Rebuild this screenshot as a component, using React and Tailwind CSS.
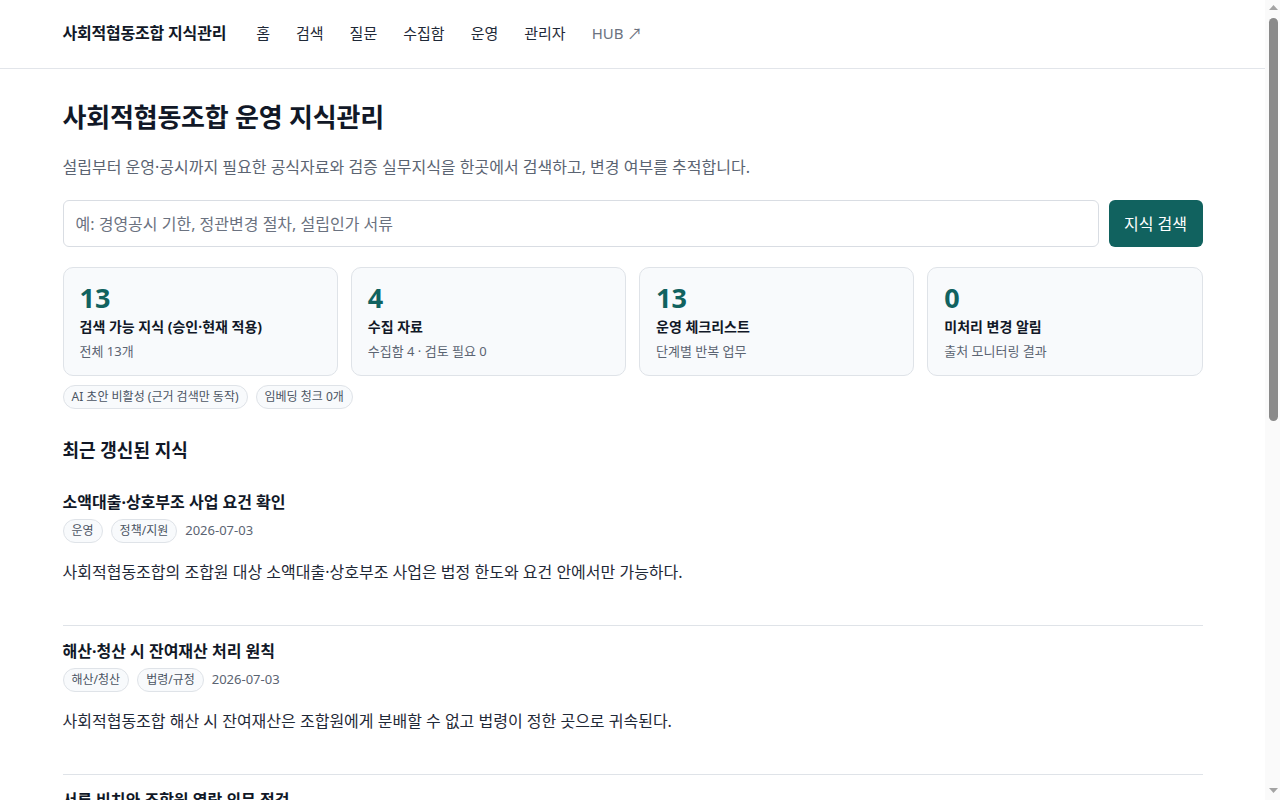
import React from "react";

const stats = [
  { value: "13", label: "검색 가능 지식 (승인·현재 적용)", sub: "전체 13개" },
  { value: "4", label: "수집 자료", sub: "수집함 4 · 검토 필요 0" },
  { value: "13", label: "운영 체크리스트", sub: "단계별 반복 업무" },
  { value: "0", label: "미처리 변경 알림", sub: "출처 모니터링 결과" },
];

const items = [
  {
    title: "소액대출·상호부조 사업 요건 확인",
    tags: ["운영", "정책/지원"],
    date: "2026-07-03",
    body: "사회적협동조합의 조합원 대상 소액대출·상호부조 사업은 법정 한도와 요건 안에서만 가능하다.",
  },
  {
    title: "해산·청산 시 잔여재산 처리 원칙",
    tags: ["해산/청산", "법령/규정"],
    date: "2026-07-03",
    body: "사회적협동조합 해산 시 잔여재산은 조합원에게 분배할 수 없고 법령이 정한 곳으로 귀속된다.",
  },
  {
    title: "서류 비치와 조합원 열람 의무 점검",
    tags: ["운영", "법령/규정"],
    date: "2026-07-03",
    body: "사회적협동조합은 정관, 규약, 총회 의사록 등 주요 서류를 비치하고 조합원 열람에 응해야 한다.",
  },
];

const nav = ["홈", "검색", "질문", "수집함", "운영", "관리자"];

// Page scroll track drawn at the right edge of the viewport
function ScrollTrack() {
  return (
    <div className="flex h-screen w-[15px] shrink-0 flex-col items-center bg-[#fafafa] pl-[1px]">
      <svg width="9" height="6" viewBox="0 0 9 6" className="mt-[5px]">
        <path d="M4.5 0 L9 5 L0 5 Z" fill="#a3a3a3" />
      </svg>
      <div className="mt-[7px] h-[403px] w-[9px] rounded-full bg-[#8a8a8a]" />
      <div className="flex-1" />
      <svg width="9" height="6" viewBox="0 0 9 6" className="mb-[6px]">
        <path d="M0 0 L9 0 L4.5 5 Z" fill="#a3a3a3" />
      </svg>
    </div>
  );
}

export default function App() {
  return (
    <div
      className="flex h-screen overflow-hidden bg-white text-[#111827]"
      style={{ fontFamily: '"Noto Sans", "Noto Sans CJK KR", sans-serif' }}
    >
      <div className="min-w-0 flex-1">
        <header className="border-b border-[#e2e5ea]">
          <div className="mx-auto flex h-[68px] max-w-[1140px] items-center pb-[2px]">
            <span className="text-[16px] font-bold tracking-[-0.2px] text-[#111827]">
              사회적협동조합 지식관리
            </span>
            <nav className="ml-[30px] flex items-center gap-[26px] text-[15px] text-[#1f2937]">
              {nav.map((n) => (
                <a key={n} href="#" className="leading-none">
                  {n}
                </a>
              ))}
              <a href="#" className="leading-none text-[#6b7280]">
                HUB ↗
              </a>
            </nav>
          </div>
        </header>

        <main className="mx-auto max-w-[1140px] pt-[28px]">
          <h1 className="text-[26px] font-bold leading-[40px] tracking-[-0.2px]">
            사회적협동조합 운영 지식관리
          </h1>
          <p className="mt-[18px] text-[16px] leading-[24px] text-[#5b6472]">
            설립부터 운영·공시까지 필요한 공식자료와 검증 실무지식을 한곳에서 검색하고, 변경 여부를 추적합니다.
          </p>

          <div className="mt-[21px] flex gap-[10px]">
            <input
              className="h-[47px] flex-1 rounded-[6px] border border-[#d9dde3] px-[12px] text-[16px] text-[#111827] placeholder:text-[#6b7280] outline-none"
              placeholder="예: 경영공시 기한, 정관변경 절차, 설립인가 서류"
            />
            <button className="h-[47px] w-[94px] rounded-[6px] bg-[#11625f] text-[16px] text-white">
              지식 검색
            </button>
          </div>

          <div className="mt-[20px] grid grid-cols-4 gap-[13px]">
            {stats.map((s) => (
              <div
                key={s.label}
                className="h-[109px] rounded-[10px] border border-[#dfe3e8] bg-[#f8fafc] px-[16px] pt-[12px]"
              >
                <div className="text-[27px] font-bold leading-[36px] text-[#11625f]">
                  {s.value}
                </div>
                <div className="mt-[1px] text-[14px] font-bold leading-[20px] text-[#111827]">
                  {s.label}
                </div>
                <div className="mt-[5px] text-[13px] leading-[18px] text-[#5b6472]">
                  {s.sub}
                </div>
              </div>
            ))}
          </div>

          <div className="mt-[9px] flex gap-[8px]">
            {["AI 초안 비활성 (근거 검색만 동작)", "임베딩 청크 0개"].map((t) => (
              <span
                key={t}
                className="rounded-full border border-[#dfe3e8] bg-[#f8fafc] px-[8px] py-[2px] text-[12px] leading-[18px] text-[#4b5563]"
              >
                {t}
              </span>
            ))}
          </div>

          <h2 className="mt-[27px] text-[18px] font-bold leading-[28px]">최근 갱신된 지식</h2>

          <div className="mt-[26px]">
            {items.map((it, i) => (
              <article
                key={it.title}
                className={
                  i === 0
                    ? "pb-[41px]"
                    : "border-t border-[#dfe3e8] pt-[13px] pb-[41px]"
                }
              >
                <h3 className="text-[16px] font-bold leading-[24px]">{it.title}</h3>
                <div className="mt-[5px] flex items-center gap-[8px]">
                  {it.tags.map((t) => (
                    <span
                      key={t}
                      className="rounded-full border border-[#dfe3e8] bg-[#f8fafc] px-[8px] py-[2px] text-[12px] leading-[18px] text-[#4b5563]"
                    >
                      {t}
                    </span>
                  ))}
                  <span className="text-[13px] text-[#5b6472]">{it.date}</span>
                </div>
                <p className="mt-[17px] text-[16px] leading-[24px] text-[#1f2937]">{it.body}</p>
              </article>
            ))}
          </div>
        </main>
      </div>
      <ScrollTrack />
    </div>
  );
}
